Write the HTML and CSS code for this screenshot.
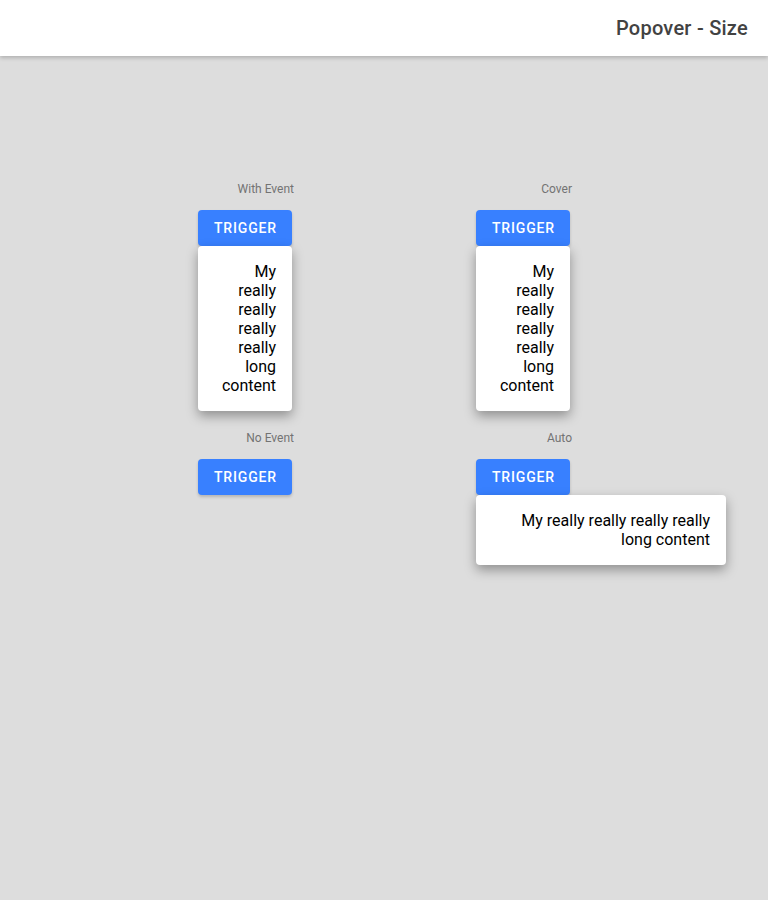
FILE: index.html
```html
<!DOCTYPE html>
<html lang="en">

<head>
    <meta charset="UTF-8">
    <meta name="viewport" content="width=device-width, initial-scale=1.0">
    <title>Popover - Size</title>
    <link rel="stylesheet" href="styles.css">
</head>

<body>
    <header class="toolbar">
        <h1 class="toolbar-title">Popover - Size</h1>
    </header>

    <main class="content">
        <div class="grid">
            <div class="cell">
                <span class="cell-label">With Event</span>
                <div class="stack">
                    <button class="trigger">Trigger</button>
                    <div class="popover">My really really really really long content</div>
                </div>
            </div>

            <div class="cell">
                <span class="cell-label">Cover</span>
                <div class="stack">
                    <button class="trigger">Trigger</button>
                    <div class="popover">My really really really really long content</div>
                </div>
            </div>

            <div class="cell">
                <span class="cell-label">No Event</span>
                <div class="stack">
                    <button class="trigger">Trigger</button>
                </div>
            </div>

            <div class="cell">
                <span class="cell-label">Auto</span>
                <div class="stack">
                    <button class="trigger">Trigger</button>
                    <div class="popover popover-auto">My really really really really long content</div>
                </div>
            </div>
        </div>
    </main>
</body>

</html>
```

FILE: styles.css
```css
body {
    margin: 0;
    min-height: 900px;
    background-color: #dddddd;
    font-family: Roboto, "Liberation Sans", sans-serif;
}

.toolbar {
    display: flex;
    justify-content: flex-end;
    align-items: center;
    height: 56px;
    padding: 0 20px;
    background-color: #ffffff;
    box-shadow: 0 2px 4px rgba(0, 0, 0, 0.2);
}

.toolbar-title {
    margin: 0;
    font-size: 20px;
    font-weight: 500;
    letter-spacing: 0.0125em;
    color: #424242;
}

.content {
    padding-top: 125px;
    padding-left: 16px;
}

.grid {
    display: grid;
    grid-template-columns: 278px 278px;
    row-gap: 19px;
    align-items: start;
}

.cell {
    display: flex;
    flex-direction: column;
    align-items: flex-end;
}

.cell-label {
    font-size: 12px;
    line-height: 17px;
    color: #737373;
    margin-bottom: 12px;
}

.stack {
    display: flex;
    flex-direction: column;
    width: 94px;
    margin-right: 2px;
}

.trigger {
    height: 36px;
    padding: 0 16px;
    background-color: #3880ff;
    color: #ffffff;
    border: none;
    border-radius: 4px;
    font-family: Roboto, "Liberation Sans", sans-serif;
    font-size: 14px;
    font-weight: 500;
    letter-spacing: 0.06em;
    text-transform: uppercase;
    box-shadow: 0 2px 3px rgba(0, 0, 0, 0.18);
    cursor: pointer;
}

.popover {
    padding: 16px;
    background-color: #ffffff;
    border-radius: 4px;
    box-shadow: 0 5px 12px rgba(0, 0, 0, 0.35);
    font-size: 16px;
    line-height: 19px;
    color: #000000;
    text-align: right;
}

.popover-auto {
    width: 250px;
    box-sizing: border-box;
}
```
